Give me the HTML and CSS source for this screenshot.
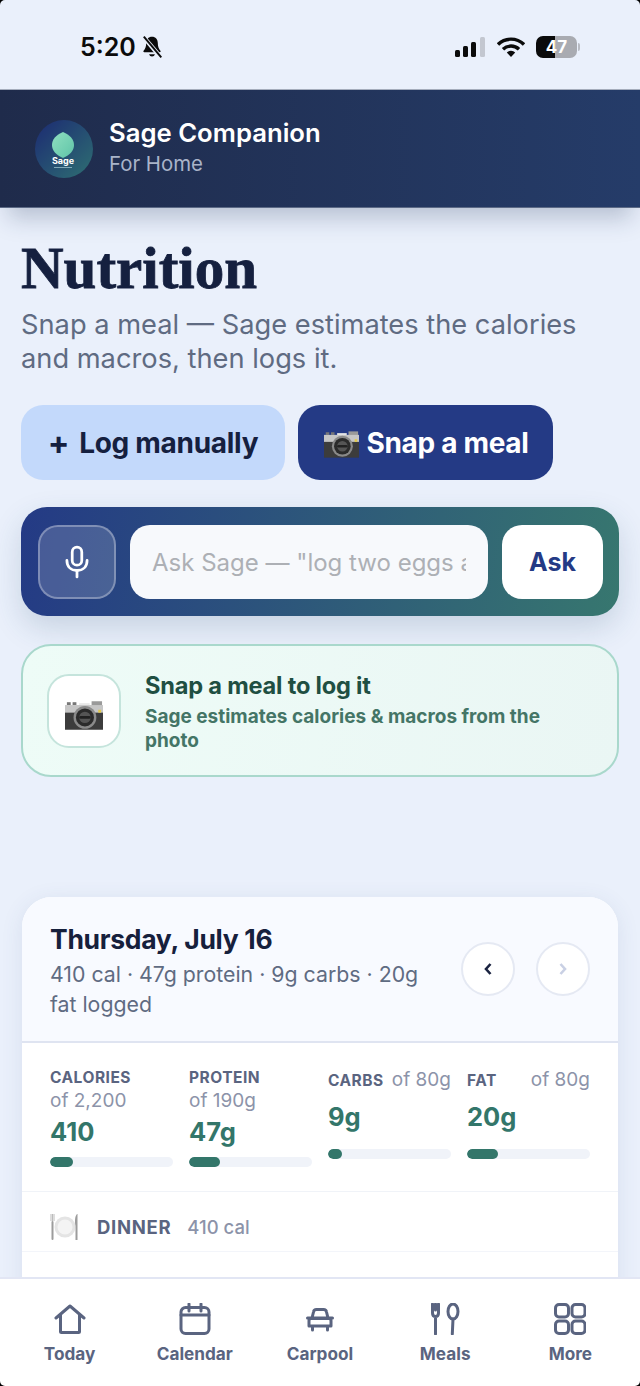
FILE: index.html
```html
<!DOCTYPE html>
<html lang="en">
<head>
  <meta charset="UTF-8">
  <title>Sage Companion - Nutrition</title>
  <link rel="stylesheet" href="styles.css">
</head>
<body>
  <svg class="defs" width="0" height="0">
    <defs>
      <linearGradient id="leaf" x1="0" y1="0" x2="1" y2="1">
        <stop offset="0" stop-color="#8fe0c0"/>
        <stop offset="1" stop-color="#5fc4a8"/>
      </linearGradient>
      <symbol id="camera" viewBox="0 0 40 30">
        <rect x="2" y="1" width="4" height="3" fill="#777"/>
        <rect x="8" y="1" width="4" height="3" fill="#777"/>
        <rect x="15" y="2" width="11" height="4" fill="#e8e8e8"/>
        <rect x="28" y="0" width="11" height="8" fill="#9a9a9a"/>
        <rect x="0" y="4" width="40" height="9" fill="#c6c6c6"/>
        <rect x="0" y="12" width="40" height="18" fill="#3c3c3c"/>
        <circle cx="21" cy="17" r="12" fill="#8a8a8a"/>
        <circle cx="21" cy="17" r="9.5" fill="#2b2b2b"/>
        <circle cx="21" cy="17" r="6" fill="#555"/>
        <rect x="15" y="15.5" width="12" height="3" rx="1.5" fill="#222"/>
        <rect x="35" y="9" width="3" height="3" fill="#e2c94a"/>
      </symbol>
    </defs>
  </svg>

  <div class="app">
    <div class="statusbar">
      <div class="status-left">
        <span class="clock">5:20</span>
        <svg class="bell" viewBox="0 0 20 22" width="22" height="24">
          <path d="M10 1.500c-3.300 0-5.300 2.500-5.300 5.700 0 3.800-.9 5.600-2.400 7.300-.5.600-.1 1.300.6 1.300h14.200c.7 0 1.100-.7.600-1.300-1.500-1.700-2.400-3.500-2.400-7.300 0-3.200-2-5.700-5.300-5.700z" fill="#0b0b0b"/>
          <path d="M7.300 17.600a2.800 2.800 0 0 0 5.400 0z" fill="#0b0b0b"/>
          <path d="M2 1.500 18.500 21" stroke="#eaf0fb" stroke-width="4"/>
          <path d="M2.500 1.500 18.500 20.500" stroke="#0b0b0b" stroke-width="1.800"/>
        </svg>
      </div>
      <div class="status-right">
        <svg viewBox="0 0 30 20" width="32" height="20">
          <rect x="0" y="13" width="5" height="7" rx="1.500" fill="#0b0b0b"/>
          <rect x="8" y="9" width="5" height="11" rx="1.500" fill="#0b0b0b"/>
          <rect x="16" y="5" width="5" height="15" rx="1.500" fill="#0b0b0b"/>
          <rect x="25" y="0" width="5" height="20" rx="1.500" fill="#c3c7d0"/>
        </svg>
        <svg viewBox="0 0 28 20" width="28" height="20">
          <path d="M1 7.500a18.500 18.500 0 0 1 26 0" fill="none" stroke="#0b0b0b" stroke-width="3.400"/>
          <path d="M6 12.300a11.500 11.500 0 0 1 16 0" fill="none" stroke="#0b0b0b" stroke-width="3.400"/>
          <path d="M9.800 15.600a5.500 5.500 0 0 1 8.400 0L14 20z" fill="#0b0b0b"/>
        </svg>
        <div class="battery"><span class="battery-num">47</span></div>
        <span class="battery-tip"></span>
      </div>
    </div>

    <header class="topbar">
      <svg class="logo" viewBox="0 0 58 58" width="58" height="58">
        <defs>
          <linearGradient id="logobg" x1="0" y1="0" x2="1" y2="1">
            <stop offset="0" stop-color="#1c2a72"/>
            <stop offset="1" stop-color="#2e6f72"/>
          </linearGradient>
        </defs>
        <circle cx="29" cy="29" r="29" fill="url(#logobg)"/>
        <path d="M28 12c7 3 11 7.500 11 13s-4 10-11 13c-7-3-11-7.500-11-13s4-10 11-13z" fill="url(#leaf)"/>
        <text x="28" y="44" text-anchor="middle" class="logo-text">Sage</text>
        <rect x="19" y="47" width="18" height="1" fill="#7fa8b8"/>
      </svg>
      <div>
        <div class="brand">Sage Companion</div>
        <div class="brand-sub">For Home</div>
      </div>
    </header>

    <main class="content">
      <h1>Nutrition</h1>
      <p class="lead">Snap a meal — Sage estimates the calories and macros, then logs it.</p>

      <div class="actions">
        <button class="btn btn-light"><span class="plus">+</span><span>Log manually</span></button>
        <button class="btn btn-dark"><svg class="btn-cam" width="35" height="27"><use href="#camera"/></svg>Snap a meal</button>
      </div>

      <div class="askbar">
        <div class="mic">
          <svg viewBox="0 0 24 32" width="26" height="34" fill="none" stroke="#fff" stroke-width="2.600" stroke-linecap="round">
            <rect x="7.500" y="2" width="9" height="17" rx="4.500"/>
            <path d="M2.500 14.500c0 6 4 9.500 9.500 9.500s9.500-3.500 9.500-9.500"/>
            <path d="M12 24v6"/>
          </svg>
        </div>
        <div class="ask-input"><span>Ask Sage — "log two eggs a</span></div>
        <button class="ask-btn">Ask</button>
      </div>

      <div class="snapcard">
        <div class="snapcard-icon"><svg width="38" height="29"><use href="#camera"/></svg></div>
        <div class="snapcard-text">
          <div class="snapcard-title">Snap a meal to log it</div>
          <div class="snapcard-sub">Sage estimates calories &amp; macros from the photo</div>
        </div>
      </div>

      <section class="day">
        <div class="day-head">
          <div class="day-info">
            <h2>Thursday, July 16</h2>
            <p>410 cal · 47g protein · 9g carbs · 20g fat logged</p>
          </div>
          <div class="day-nav">
            <button class="round">
              <svg viewBox="0 0 10 14" width="10" height="14"><path d="M7.500 2 3 7l4.500 5" fill="none" stroke="#1a2340" stroke-width="2.600"/></svg>
            </button>
            <button class="round">
              <svg viewBox="0 0 10 14" width="10" height="14"><path d="M2.500 2 7 7l-4.500 5" fill="none" stroke="#c9d0e4" stroke-width="2.600"/></svg>
            </button>
          </div>
        </div>

        <div class="macros">
          <div class="macro">
            <div class="macro-top"><span class="macro-label">Calories</span><span class="macro-goal">of 2,200</span></div>
            <div class="macro-value">410</div>
            <div class="bar"><div class="bar-fill" style="width:19%"></div></div>
          </div>
          <div class="macro">
            <div class="macro-top"><span class="macro-label">Protein</span><span class="macro-goal">of 190g</span></div>
            <div class="macro-value">47g</div>
            <div class="bar"><div class="bar-fill" style="width:25%"></div></div>
          </div>
          <div class="macro macro-short">
            <div class="macro-top"><span class="macro-label">Carbs</span><span class="macro-goal">of 80g</span></div>
            <div class="macro-value">9g</div>
            <div class="bar"><div class="bar-fill" style="width:11%"></div></div>
          </div>
          <div class="macro macro-short">
            <div class="macro-top"><span class="macro-label">Fat</span><span class="macro-goal">of 80g</span></div>
            <div class="macro-value">20g</div>
            <div class="bar"><div class="bar-fill" style="width:25%"></div></div>
          </div>
        </div>

        <div class="meal">
          <svg class="plate" viewBox="0 0 30 28" width="30" height="28">
            <circle cx="15" cy="14" r="10.500" fill="#e4e4e4"/>
            <circle cx="15" cy="14" r="7.500" fill="#f4f4f4"/>
            <path d="M1 1v7M2.500 1v7M4 1v7" stroke="#a9a9a9" stroke-width=".8"/>
            <rect x="1.500" y="8" width="2" height="19" rx="1" fill="#9c9c9c"/>
            <path d="M27 1c-2 2-2.500 7-1.500 12v14h2V1z" fill="#9c9c9c"/>
          </svg>
          <span class="meal-name">Dinner</span>
          <span class="meal-cal">410 cal</span>
        </div>
      </section>
    </main>

    <nav class="tabs">
      <div class="tab">
        <svg viewBox="0 0 32 32" width="32" height="32"><path d="M2 15 16 3l14 12M6.500 12v16.500a1 1 0 0 0 1 1h17a1 1 0 0 0 1-1V12"/></svg>
        <span>Today</span>
      </div>
      <div class="tab">
        <svg viewBox="0 0 32 32" width="32" height="32"><rect x="2" y="4.500" width="28" height="26" rx="4.500"/><path d="M2 12h28M10 1v7M22 1v7"/></svg>
        <span>Calendar</span>
      </div>
      <div class="tab">
        <svg viewBox="0 0 32 32" width="32" height="32"><path d="M8 15l1.500-6a3 3 0 0 1 3-2.500h7a3 3 0 0 1 3 2.500L24 15M3.500 15h25M7 15.500h18a2 2 0 0 1 2 2V23H5v-5.500a2 2 0 0 1 2-2zM8.500 23v4M23.500 23v4"/></svg>
        <span>Carpool</span>
      </div>
      <div class="tab">
        <svg viewBox="0 0 32 32" width="32" height="32"><path d="M3.500 1v9c0 2.500 1 3.500 3 3.500s3-1 3-3.500V1M6.500 1v6M6.500 13.500V31"/><ellipse cx="24" cy="8.500" rx="5" ry="7.500"/><path d="M24 16l-.7 15"/></svg>
        <span>Meals</span>
      </div>
      <div class="tab">
        <svg viewBox="0 0 32 32" width="32" height="32"><rect x="1.500" y="1.500" width="13" height="12.500" rx="3.500"/><rect x="18" y="1.500" width="13" height="12.500" rx="3.500"/><rect x="1.500" y="18" width="13" height="12.500" rx="3.500"/><rect x="18" y="18" width="13" height="12.500" rx="3.500"/></svg>
        <span>More</span>
      </div>
    </nav>
  </div>
  <div class="corners"></div>
</body>
</html>
```

FILE: styles.css
```css
* {
  box-sizing: border-box;
}

html, body {
  margin: 0;
  height: 100%;
  overflow: hidden;
}

body {
  font-family: 'Inter', 'Liberation Sans', sans-serif;
  background: #eaf0fb;
  color: #1a2340;
}

.defs {
  position: absolute;
}

.app {
  height: 1386px;
  display: flex;
  flex-direction: column;
}

/* Barra de estado */
.statusbar {
  height: 90px;
  flex: none;
  display: flex;
  justify-content: space-between;
  align-items: center;
  padding: 5px 60px 0 80px;
  background: #eaf0fb;
  border-bottom: 1px solid #a5adbc;
}

.status-left {
  display: flex;
  align-items: center;
  gap: 5px;
}

.clock {
  font-family: 'Inter', sans-serif;
  font-size: 25px;
  font-weight: 600;
  color: #0b0b0b;
}

.status-right {
  display: flex;
  align-items: center;
  gap: 11px;
}

.battery {
  position: relative;
  width: 41px;
  height: 22px;
  border-radius: 7px;
  background: linear-gradient(90deg, #0b0b0b 47%, #a9abb1 47%);
  display: flex;
  align-items: center;
  justify-content: center;
}

.battery-num {
  color: #fff;
  font-size: 17px;
  font-weight: 700;
}

.battery-tip {
  width: 2px;
  height: 8px;
  margin-left: -10px;
  border-radius: 0 2px 2px 0;
  background: #b9bcc4;
}

/* Cabecera */
.topbar {
  height: 118px;
  flex: none;
  display: flex;
  align-items: center;
  gap: 16px;
  padding: 0 35px 3px;
  background: linear-gradient(90deg, #1f2b4b, #253c69);
  box-shadow: 0 18px 22px -8px rgba(30, 50, 90, 0.25);
  border-bottom: 1px solid #5c6a86;
  position: relative;
  z-index: 2;
}

.logo {
  flex: none;
  margin-top: 3px;
}

.logo-text {
  font-family: 'Inter', sans-serif;
  font-size: 9px;
  font-weight: 700;
  fill: #fff;
}

.brand {
  font-size: 25.700px;
  font-weight: 600;
  color: #fff;
  line-height: 32px;
}

.brand-sub {
  font-size: 20.400px;
  color: #a9b4c9;
  line-height: 28px;
  margin-top: 1px;
}

/* Contenido */
.content {
  flex: 1;
  min-height: 0;
  overflow: hidden;
  padding: 30px 21px 0;
}

h1 {
  margin: 0;
  font-family: 'Liberation Serif', serif;
  font-size: 59px;
  line-height: 60px;
  font-weight: 700;
  color: #15203f;
  -webkit-text-stroke: 0.8px #15203f;
}

.lead {
  margin: 10px 0 0;
  font-size: 27.250px;
  line-height: 34px;
  color: #5f6b82;
}

.actions {
  display: flex;
  gap: 13px;
  margin-top: 29px;
}

.btn {
  height: 75px;
  border: none;
  border-radius: 22px;
  font-family: inherit;
  font-size: 28px;
  font-weight: 700;
  display: flex;
  align-items: center;
  letter-spacing: -0.3px;
}

.btn-light {
  width: 264px;
  justify-content: center;
  gap: 10px;
  background: #c3d9fb;
  color: #15203f;
}

.plus {
  font-size: 32px;
}

.btn-dark {
  width: 255px;
  justify-content: center;
  gap: 7px;
  background: #243a85;
  color: #fff;
}

.btn-cam {
  margin: 3px 0 0 2px;
}

.askbar {
  margin-top: 27px;
  width: 598px;
  height: 109px;
  padding: 18px 17px 17px;
  display: flex;
  gap: 14px;
  border-radius: 26px;
  background: linear-gradient(100deg, #243a85, #37776f);
  box-shadow: 0 12px 30px rgba(40, 80, 110, 0.18);
}

.mic {
  width: 78px;
  flex: none;
  display: flex;
  align-items: center;
  justify-content: center;
  border-radius: 20px;
  border: 2px solid rgba(255, 255, 255, 0.3);
  background: rgba(255, 255, 255, 0.16);
}

.ask-input {
  width: 358px;
  flex: none;
  padding: 0 22px;
  border-radius: 20px;
  background: #f7f9fc;
  display: flex;
  align-items: center;
  font-size: 24px;
  color: #adb0b5;
}

.ask-input span {
  display: block;
  width: 100%;
  overflow: hidden;
  white-space: nowrap;
}

.ask-btn {
  width: 101px;
  flex: none;
  border: none;
  border-radius: 20px;
  background: #fff;
  color: #243a85;
  font-family: inherit;
  font-size: 25px;
  font-weight: 700;
}

.snapcard {
  margin-top: 28px;
  width: 598px;
  height: 133px;
  display: flex;
  align-items: center;
  gap: 24px;
  padding: 0 24px;
  border: 2px solid #a9d8cc;
  border-radius: 30px;
  background: linear-gradient(100deg, #eefcf7, #eaf6f4);
}

.snapcard-icon {
  width: 74px;
  height: 74px;
  flex: none;
  display: flex;
  align-items: center;
  justify-content: center;
  padding-top: 9px;
  border-radius: 22px;
  border: 2px solid #c5e4dc;
  background: #fff;
}

.snapcard-text {
  padding-top: 3px;
}

.snapcard-title {
  font-size: 23.600px;
  font-weight: 700;
  line-height: 30px;
  color: #1f4f42;
  letter-spacing: -0.2px;
}

.snapcard-sub {
  font-size: 19px;
  font-weight: 700;
  line-height: 24px;
  margin-top: 4px;
  color: #447566;
}

/* Tarjeta del dia */
.day {
  margin: 120px 1px 0;
  width: 596px;
  padding-bottom: 60px;
  background: #fff;
  border-radius: 30px 30px 0 0;
  box-shadow: 0 4px 22px rgba(60, 80, 130, 0.1);
}

.day-head {
  height: 146px;
  display: flex;
  align-items: center;
  justify-content: space-between;
  padding: 0 28px;
  background: #f8faff;
  border-bottom: 2px solid #dfe4f1;
  border-radius: 30px 30px 0 0;
}

.day-info {
  width: 390px;
  padding-top: 4px;
}

h2 {
  margin: 0;
  font-size: 26.500px;
  line-height: 32px;
  font-weight: 700;
  color: #16203c;
  letter-spacing: -0.3px;
}

.day-info p {
  margin: 4px 0 0;
  font-size: 21.300px;
  line-height: 30px;
  color: #5f6b82;
}

.day-nav {
  display: flex;
  gap: 21px;
}

.round {
  width: 54px;
  height: 54px;
  border-radius: 50%;
  border: 2px solid #e5e9f3;
  background: #fff;
  display: flex;
  align-items: center;
  justify-content: center;
  padding: 0;
}

.macros {
  display: grid;
  grid-template-columns: repeat(4, 1fr);
  gap: 16px;
  align-items: start;
  padding: 24px 28px 24px;
  border-bottom: 1px solid #f0f3f8;
}

.macro-top {
  display: flex;
  flex-wrap: wrap;
  justify-content: space-between;
  align-items: baseline;
}

.macro-label {
  font-size: 15.500px;
  font-weight: 700;
  line-height: 22px;
  letter-spacing: 0.5px;
  text-transform: uppercase;
  color: #5a6480;
}

.macro-goal {
  font-size: 19px;
  line-height: 24px;
  color: #8c93a9;
}

.macro-value {
  margin-top: 2px;
  font-size: 25.500px;
  font-weight: 700;
  line-height: 34px;
  color: #33766a;
}

.bar {
  margin-top: 8px;
  height: 10px;
  border-radius: 5px;
  background: #f0f3f9;
  overflow: hidden;
}

.bar-fill {
  height: 100%;
  border-radius: 5px;
  background: #33766a;
}

/* Carbs y fat caben en una sola linea */
.macro-short .macro-top {
  margin-top: 1px;
}

.macro-short .macro-value {
  margin-top: 8px;
}

.macro-short .bar {
  margin-top: 15px;
}

.meal {
  height: 60px;
  display: flex;
  align-items: center;
  padding: 10px 28px 0;
  border-bottom: 1px solid #f3f5fa;
}

.plate {
  flex: none;
  margin-right: 17px;
}

.meal-name {
  font-size: 18.500px;
  font-weight: 700;
  letter-spacing: 0.7px;
  text-transform: uppercase;
  color: #5a6480;
  margin-right: 16px;
}

.meal-cal {
  font-size: 18.500px;
  font-weight: 500;
  color: #8c93a9;
}

/* Barra inferior */
.tabs {
  height: 109px;
  flex: none;
  display: flex;
  padding: 0 7px;
  background: #fff;
  border-top: 2px solid #e2e6f4;
  position: relative;
  z-index: 2;
}

.tab {
  flex: 1;
  display: flex;
  flex-direction: column;
  align-items: center;
  padding-top: 24px;
  gap: 8px;
}

.tab svg {
  fill: none;
  stroke: #5a6480;
  stroke-width: 3;
  stroke-linecap: round;
  stroke-linejoin: round;
}

.tab span {
  font-size: 17.200px;
  font-weight: 700;
  line-height: 22px;
  color: #5a6480;
}

.corners {
  position: fixed;
  top: 0;
  left: 0;
  right: 0;
  bottom: 0;
  border-radius: 5px;
  box-shadow: 0 0 0 8px #000;
  pointer-events: none;
  z-index: 5;
}
```
